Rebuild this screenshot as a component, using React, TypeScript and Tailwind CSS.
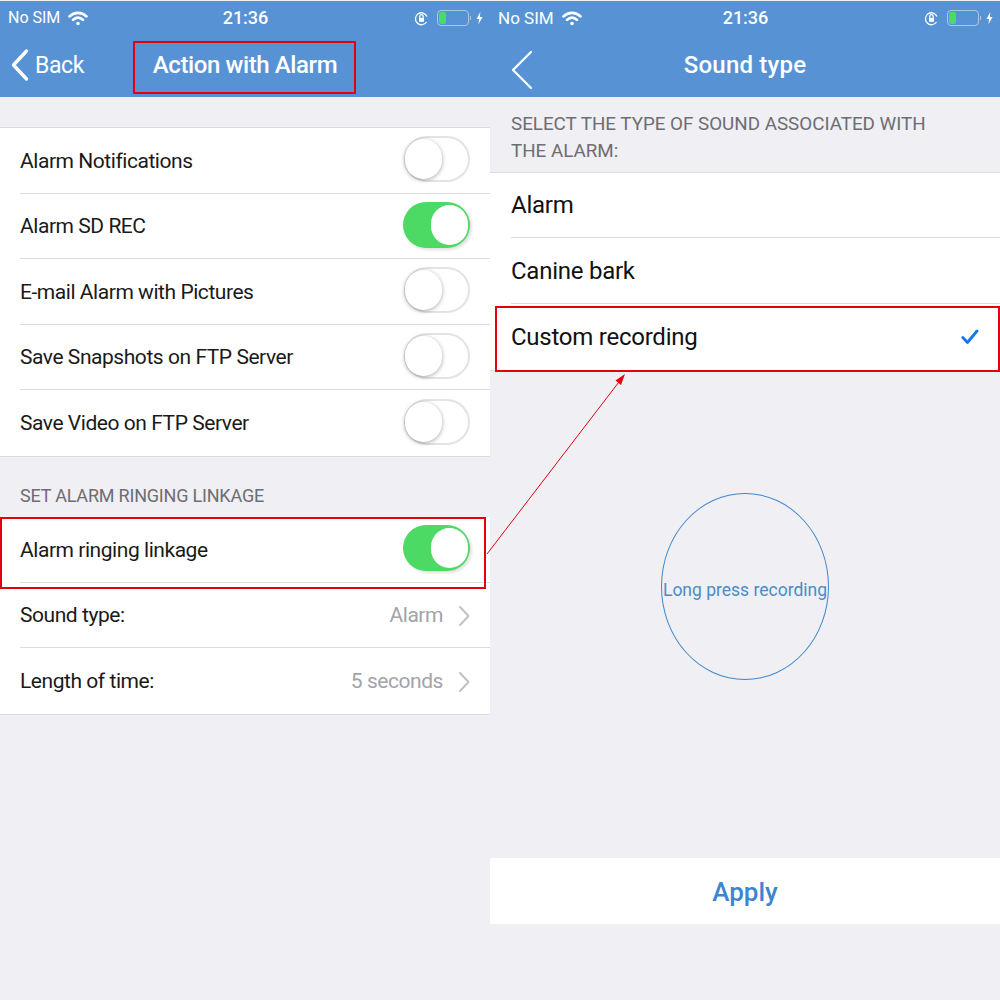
const font = { fontFamily: "Roboto, sans-serif" };

function StatusBar({ simClass }: { simClass: string }) {
  return (
    <div className="flex h-[33px] items-center justify-between pl-2 pr-[7px] pt-px text-white">
      <div className="flex w-[130px] items-center gap-[8px]">
        <span className={`${simClass} leading-none`}>No SIM</span>
        <svg width="20" height="15" viewBox="0 0 19 14" fill="none" stroke="white" strokeWidth="2.6" strokeLinecap="round">
          <path d="M1.5 5 C6 0.5 13 0.5 17.5 5" />
          <path d="M4.8 8.3 C7.5 5.6 11.5 5.6 14.2 8.3" />
          <circle cx="9.5" cy="11.8" r="1.7" fill="white" stroke="none" />
        </svg>
      </div>
      <span className="text-[18px] font-medium leading-none">21:36</span>
      <div className="flex w-[130px] items-center justify-end">
        <svg width="15" height="15" viewBox="0 0 15 15" fill="none" stroke="white" strokeWidth="1.3" className="mr-[8px]">
          <path d="M12.5 11 A6 6 0 1 1 13 5.5" />
          <rect x="5" y="6.8" width="5" height="4" fill="white" stroke="none" />
          <path d="M5.8 6.8 V5.4 a1.7 1.7 0 0 1 3.4 0 V6.8" />
        </svg>
        <div className="flex h-[16px] w-[32px] items-center rounded-[4px] border border-[#a9c7e8] p-px">
          <div className="h-full w-[7px] rounded-[2px] bg-[#4cd964]" />
        </div>
        <div className="ml-px mr-[5px] h-[4px] w-px bg-[#a9c7e8]" />
        <svg width="7" height="14" viewBox="0 0 8 14" fill="white">
          <path d="M5 0 L0.5 8 H3.5 L2.8 14 L7.5 5.8 H4.4 Z" />
        </svg>
      </div>
    </div>
  );
}

function Toggle({ on }: { on?: boolean }) {
  if (on) {
    return (
      <div className="-mt-[4px] flex h-[46px] w-[67px] items-center justify-end rounded-full bg-[#4cd964] pr-[2px] shadow-[2px_2px_3px_rgba(0,0,0,0.12)]">
        <div className="h-[40px] w-[37px] rounded-full bg-white" />
      </div>
    );
  }
  return (
    <div className="-mt-[4px] flex h-[46px] w-[66px] items-center rounded-full border-2 border-[#e3e3e5] bg-white">
      <div className="-ml-[1px] h-[40px] w-[37px] rounded-full bg-white shadow-[0_1px_4px_rgba(0,0,0,0.35)]" />
    </div>
  );
}

function Row({ children, last }: { children: React.ReactNode; last?: boolean }) {
  return (
    <div className="h-[65.5px] bg-white pl-5">
      <div className={`flex h-full items-center justify-between pr-5 pt-[2px] text-[21px] tracking-[-0.45px] ${last ? "" : "border-b border-[#dcdcdf]"}`}>
        {children}
      </div>
    </div>
  );
}

function ValueRow({ label, value, last }: { label: string; value: string; last?: boolean }) {
  return (
    <Row last={last}>
      <span className="text-[#1a1a1a]">{label}</span>
      <div className="flex items-center gap-[15px] text-[#a3a3a8]">
        {value}
        <svg width="12" height="22" viewBox="0 0 12 22" fill="none" stroke="#c1c1c5" strokeWidth="2" strokeLinecap="round" strokeLinejoin="round">
          <path d="M2 2 L10.5 11 L2 20" />
        </svg>
      </div>
    </Row>
  );
}

function LeftScreen() {
  return (
    <div className="relative h-full w-[490px] shrink-0">
      <div className="bg-[#5793d4]">
        <StatusBar simClass="text-[16px]" />
        <div className="relative flex h-[63px] items-center justify-center pb-[2px] text-white">
          <div className="absolute left-[10px] flex items-center gap-[5px]">
            <svg width="20" height="34" viewBox="0 0 20 34" fill="none" stroke="white" strokeWidth="3.4" strokeLinecap="round" strokeLinejoin="round">
              <path d="M16.5 3 L3.5 17 L16.5 31" />
            </svg>
            <span className="pt-[3px] text-[23px] tracking-[-0.4px]">Back</span>
          </div>
          <span className="text-[24px] font-medium tracking-[-0.4px]">Action with Alarm</span>
        </div>
      </div>

      <div className="mt-[30px] border-y border-[#dcdcdf]">
        <Row>
          <span className="text-[#1a1a1a]">Alarm Notifications</span>
          <Toggle />
        </Row>
        <Row>
          <span className="text-[#1a1a1a]">Alarm SD REC</span>
          <Toggle on />
        </Row>
        <Row>
          <span className="text-[#1a1a1a]">E-mail Alarm with Pictures</span>
          <Toggle />
        </Row>
        <Row>
          <span className="text-[#1a1a1a]">Save Snapshots on FTP Server</span>
          <Toggle />
        </Row>
        <Row last>
          <span className="text-[#1a1a1a]">Save Video on FTP Server</span>
          <Toggle />
        </Row>
      </div>

      <div className="flex h-[60.5px] items-end pb-[8px] pl-5 text-[18px] tracking-[-0.2px] text-[#6d6d72]">SET ALARM RINGING LINKAGE</div>

      <div className="border-b border-[#dcdcdf]">
        <Row>
          <span className="text-[#1a1a1a]">Alarm ringing linkage</span>
          <Toggle on />
        </Row>
        <ValueRow label="Sound type:" value="Alarm" />
        <ValueRow label="Length of time:" value="5 seconds" last />
      </div>

      {/* red callouts */}
      <div className="absolute left-[133px] top-[40px] h-[53px] w-[223px] border-2 border-[#e3000f]" />
      <div className="absolute left-0 top-[516px] h-[72px] w-[486px] border-2 border-[#e3000f]" />
    </div>
  );
}

function RightScreen() {
  return (
    <div className="relative flex h-full flex-1 flex-col">
      <div className="bg-[#5793d4]">
        <StatusBar simClass="text-[17px]" />
        <div className="relative flex h-[63px] items-center justify-center pb-[2px] text-white">
          <svg width="24" height="40" viewBox="0 0 24 40" fill="none" stroke="white" strokeWidth="2.2" strokeLinecap="round" strokeLinejoin="round" className="absolute left-[20px] top-[16px]">
            <path d="M21 2 L3 20 L21 38" />
          </svg>
          <span className="text-[24px] font-medium tracking-[0.2px]">Sound type</span>
        </div>
      </div>

      <div className="h-[75px] pl-[21px] pr-[50px] pt-[14px] text-[18.8px] leading-[27px] text-[#6d6d72]">
        SELECT THE TYPE OF SOUND ASSOCIATED WITH THE ALARM:
      </div>

      <div className="border-y border-[#dcdcdf] text-[24px] tracking-[-0.25px] text-[#111]">
        <div className="h-[65px] bg-white pl-[21px]">
          <div className="flex h-full items-center border-b border-[#dcdcdf]">Alarm</div>
        </div>
        <div className="h-[66px] bg-white pl-[21px]">
          <div className="flex h-full items-center border-b border-[#dcdcdf]">Canine bark</div>
        </div>
        <div className="flex h-[66px] items-center justify-between bg-white px-[21px]">
          Custom recording
          <svg width="18" height="16" viewBox="0 0 18 16" fill="none" stroke="#1479e6" strokeWidth="2.8" strokeLinecap="round" strokeLinejoin="round">
            <path d="M1.8 8.5 L6.5 13.5 L16 2" />
          </svg>
        </div>
      </div>

      <div className="ml-[171px] mt-[122px] flex h-[187px] w-[168px] items-center justify-center whitespace-nowrap rounded-[50%] border border-[#3f87cc] pt-2 text-[17.5px] text-[#4a8cca]">
        Long press recording
      </div>

      <div className="mt-[178px] flex h-[66px] items-center justify-center bg-white pt-[3px] text-[26px] font-medium text-[#3a86cf]">
        Apply
      </div>

      {/* red callout */}
      <div className="absolute left-[5px] top-[305px] h-[66px] w-[505px] border-2 border-[#e3000f]" />
    </div>
  );
}

export default function App() {
  return (
    <div className="relative flex h-[1000px] w-[1000px] overflow-hidden bg-[#efeff4] pt-px" style={font}>
      <LeftScreen />
      <RightScreen />
      {/* arrow linking the two callouts */}
      <svg width="1000" height="1000" viewBox="0 0 1000 1000" className="pointer-events-none absolute left-0 top-0">
        <path d="M487 554 L622 378" stroke="#e3000f" strokeWidth="1" fill="none" />
        <path d="M625 374 L615.5 380.5 L621 385 Z" fill="#e3000f" />
      </svg>
    </div>
  );
}
